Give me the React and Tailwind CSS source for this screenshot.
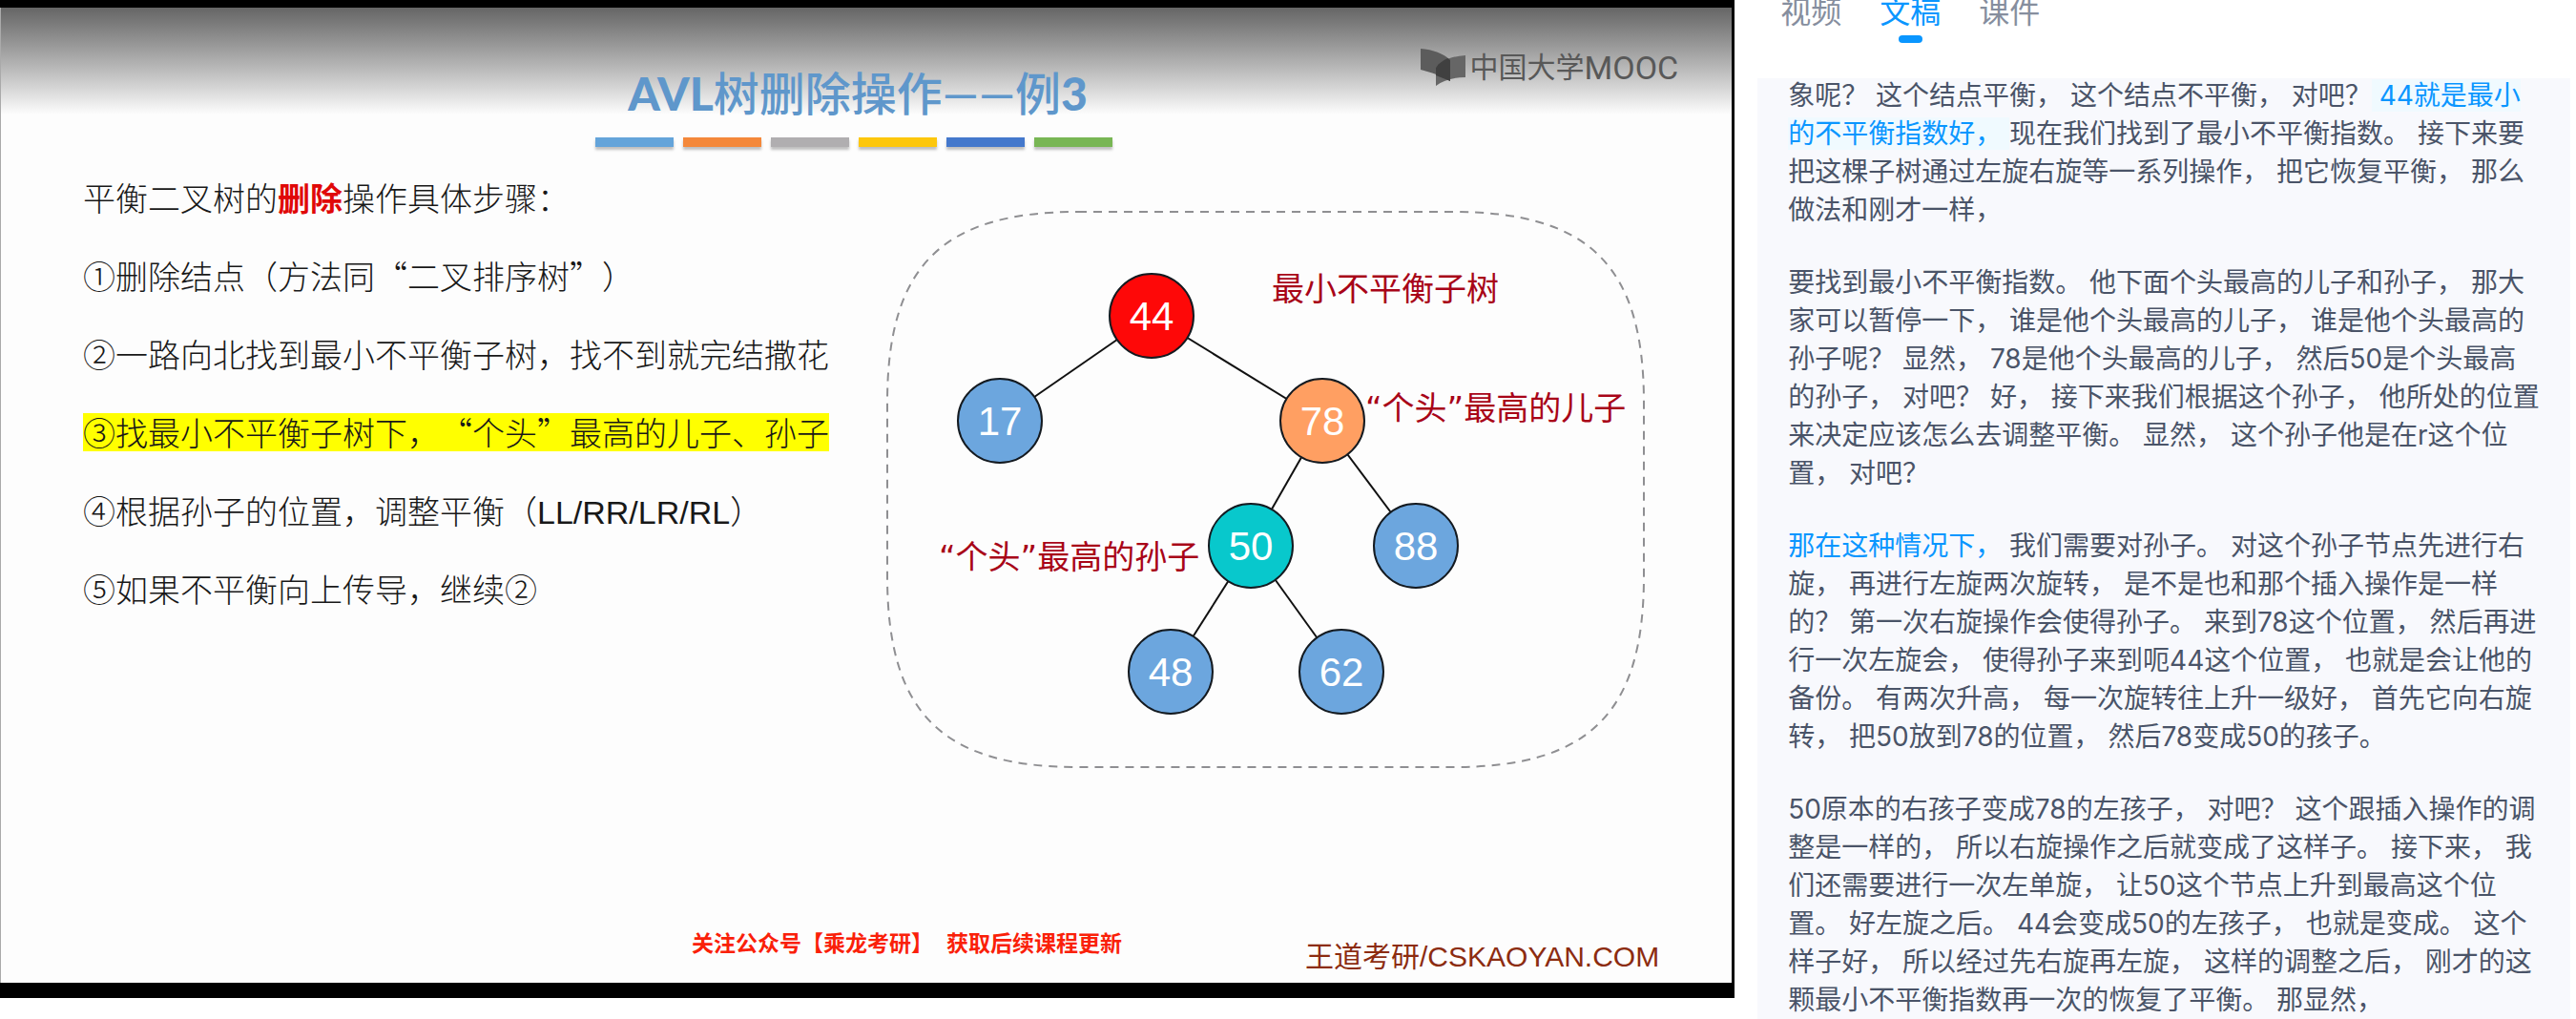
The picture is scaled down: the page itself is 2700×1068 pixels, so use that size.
import React from "react";

const SANS = "font-['Liberation_Sans','Noto_Sans_CJK_SC',sans-serif]";
const UI = "font-[Inter,'Noto_Sans_CJK_SC',sans-serif]";

const BARS = [
  "bg-[#64a4da]",
  "bg-[#f4883a]",
  "bg-[#b0aeb0]",
  "bg-[#fdc70c]",
  "bg-[#4478cc]",
  "bg-[#78b654]",
];

const NODES = [
  { v: 44, x: 280, y: 112, fill: "#fe0808" },
  { v: 17, x: 121, y: 222, fill: "#6ca6de" },
  { v: 78, x: 459, y: 222, fill: "#ff9f62" },
  { v: 50, x: 384, y: 353, fill: "#08c8cc" },
  { v: 88, x: 557, y: 353, fill: "#6ca6de" },
  { v: 48, x: 300, y: 485, fill: "#6ca6de" },
  { v: 62, x: 479, y: 485, fill: "#6ca6de" },
];

const EDGES = [
  [0, 1],
  [0, 2],
  [2, 3],
  [2, 4],
  [3, 5],
  [3, 6],
];

const LABELS = [
  { t: "最小不平衡子树", x: 406, y: 96 },
  { t: "“个头”最高的儿子", x: 504, y: 221 },
  { t: "“个头”最高的孙子", x: 57, y: 377 },
];

const PARAGRAPHS = [
  [
    { t: "象呢？ 这个结点平衡， 这个结点不平衡， 对吧？" },
    { t: " 44就是最小的不平衡指数好， ", c: "bg-[#f0faff] text-[#0a96ff]" },
    { t: "现在我们找到了最小不平衡指数。 接下来要把这棵子树通过左旋右旋等一系列操作， 把它恢复平衡， 那么做法和刚才一样，" },
  ],
  [
    { t: "要找到最小不平衡指数。 他下面个头最高的儿子和孙子， 那大家可以暂停一下， 谁是他个头最高的儿子， 谁是他个头最高的孙子呢？ 显然， 78是他个头最高的儿子， 然后50是个头最高的孙子， 对吧？ 好， 接下来我们根据这个孙子， 他所处的位置来决定应该怎么去调整平衡。 显然， 这个孙子他是在r这个位置， 对吧？" },
  ],
  [
    { t: "那在这种情况下， ", c: "text-[#0a96ff]" },
    { t: "我们需要对孙子。 对这个孙子节点先进行右旋， 再进行左旋两次旋转， 是不是也和那个插入操作是一样的？ 第一次右旋操作会使得孙子。 来到78这个位置， 然后再进行一次左旋会， 使得孙子来到呃44这个位置， 也就是会让他的备份。 有两次升高， 每一次旋转往上升一级好， 首先它向右旋转， 把50放到78的位置， 然后78变成50的孩子。" },
  ],
  [
    { t: "50原本的右孩子变成78的左孩子， 对吧？ 这个跟插入操作的调整是一样的， 所以右旋操作之后就变成了这样子。 接下来， 我们还需要进行一次左单旋， 让50这个节点上升到最高这个位置。 好左旋之后。 44会变成50的左孩子， 也就是变成。 这个样子好， 所以经过先右旋再左旋， 这样的调整之后， 刚才的这颗最小不平衡指数再一次的恢复了平衡。 那显然，" },
  ],
];

function TreeDiagram() {
  return (
    <svg viewBox="0 0 800 588" className="w-[800px] shrink" role="img" aria-label="AVL树">
      <path
        d="M203 3H596C739 3 796 60 796 203V385C796 528 739 585 596 585H203C60 585 3 528 3 385V203C3 60 60 3 203 3Z"
        fill="none"
        stroke="#8f8f92"
        strokeWidth="2"
        strokeDasharray="9 7"
      />
      {EDGES.map(([a, b]) => (
        <line
          key={`${a}-${b}`}
          x1={NODES[a].x}
          y1={NODES[a].y}
          x2={NODES[b].x}
          y2={NODES[b].y}
          stroke="#111"
          strokeWidth="2"
        />
      ))}
      {NODES.map((n) => (
        <g key={n.v}>
          <circle cx={n.x} cy={n.y} r="44" fill={n.fill} stroke="#141a20" strokeWidth="2" />
          <text
            x={n.x}
            y={n.y + 15}
            textAnchor="middle"
            fill="#fff"
            className="font-['Liberation_Sans',sans-serif] text-[42px]"
          >
            {n.v}
          </text>
        </g>
      ))}
      {LABELS.map((l) => (
        <text
          key={l.t}
          x={l.x}
          y={l.y}
          fill="#a80418"
          className="font-['DejaVu_Sans','Noto_Sans_CJK_SC',sans-serif] text-[34px]"
        >
          {l.t}
        </text>
      ))}
    </svg>
  );
}

function MoocLogo() {
  return (
    <div className="absolute top-[43px] right-[56px] flex items-center gap-1 text-[#585858]">
      <svg viewBox="0 0 48 40" className="h-10 w-12" aria-hidden="true">
        <path d="M0 0C13 1 24 5 31 12V34C23 29 12 25 0 22Z" fill="#5c5c5c" />
        <path d="M16 39V20C22 12 33 8 47 7V30C35 30 24 33 16 39Z" fill="#666" />
        <path d="M16 28V20C19 15 24 12 28.500 10L31 12V34Z" fill="#404040" />
      </svg>
      <div className="flex items-center leading-10">
        <span className={`${SANS} text-[30px]`}>中国大学</span>
        <span className="font-[Roboto,sans-serif] text-[34px]">MOOC</span>
      </div>
    </div>
  );
}

function Slide() {
  return (
    <section className="w-[67.34%] shrink-0 self-start bg-black pt-2 pr-[3px] pb-4 [text-spacing-trim:space-all]">
      <div className="relative flex flex-col border-l border-[#aaa] bg-[#fdfdfd] pb-[7px]">
        <div className="absolute inset-x-0 top-0 h-[112px] bg-linear-to-b from-[#666] to-[#fdfdfd]" />
        <MoocLogo />
        <header className="relative flex flex-col items-center gap-[14px] pt-[58px] pr-[18px]">
          <h1 className="font-[Lato,'Noto_Sans_CJK_SC',sans-serif] text-[48px] leading-[64px] font-medium text-[#5f97cb]">
            <span className="font-black">AVL</span>树删除操作——例<span className="font-black">3</span>
          </h1>
          <div className="flex gap-[10px] pr-2">
            {BARS.map((c) => (
              <div key={c} className={`h-[10px] w-[82px] shadow-[0_3px_3px_rgba(0,0,0,0.25)] ${c}`} />
            ))}
          </div>
        </header>

        <div className="flex pt-3 pl-[86px]">
          <div className="w-[840px] shrink-0 font-['Noto_Sans_CJK_SC',sans-serif] text-[34px] leading-[82px] font-light whitespace-nowrap text-[#181818]">
            <p>
              平衡二叉树的<strong className="font-bold text-[#e00808]">删除</strong>操作具体步骤：
            </p>
            <ol>
              <li>①删除结点（方法同“二叉排序树”）</li>
              <li>②一路向北找到最小不平衡子树，找不到就完结撒花</li>
              <li className="flex h-[82px] items-center">
                <mark className="bg-[#ffff00] leading-10 text-[#181818]">③找最小不平衡子树下，“个头”最高的儿子、孙子</mark>
              </li>
              <li>
                ④根据孙子的位置，调整平衡（<span className="font-['Liberation_Sans',sans-serif] leading-none">LL/RR/LR/RL</span>）
              </li>
              <li>⑤如果不平衡向上传导，继续②</li>
            </ol>
          </div>
          <div className="min-w-0 pt-[53px]">
            <TreeDiagram />
          </div>
        </div>

        <footer className={`mt-[162px] flex h-[54px] items-start justify-between pr-[76px] pl-[724px] leading-10 whitespace-nowrap ${SANS}`}>
          <p className="flex gap-[14px] text-[23px] font-bold text-[#fa2008]">
            <span>关注公众号【乘龙考研】</span>
            <span>获取后续课程更新</span>
          </p>
          <p className="self-end text-[30px] text-[#8c2c10]">王道考研/CSKAOYAN.COM</p>
        </footer>
      </div>
    </section>
  );
}

function Transcript() {
  const tabs = ["视频", "文稿", "课件"];
  return (
    <aside className={`flex min-w-0 flex-1 flex-col pr-[6px] pl-6 ${UI}`}>
      <nav role="tablist" className="flex h-[82px] shrink-0 gap-10 pl-6 text-[32px]">
        {tabs.map((t) => (
          <button
            key={t}
            type="button"
            role="tab"
            aria-selected={t === "文稿"}
            className={`flex flex-col items-center self-start ${t === "文稿" ? "text-[#0a96ff]" : "text-[#868e9e]"}`}
          >
            <span className="-mt-3 leading-[49px]">{t}</span>
            {t === "文稿" && <span className="h-2 w-[25px] rounded-[4px] bg-[#0a96ff]" />}
          </button>
        ))}
      </nav>
      <div className="min-h-0 flex-1 overflow-hidden bg-[#f8f9fd] pr-[30px] pl-8">
        <div className="-mt-0.5 space-y-9 text-[28px] leading-10 text-[#4a5468]">
          {PARAGRAPHS.map((p, i) => (
            <p key={i}>
              {p.map((s, j) => (
                <span key={j} className={s.c}>
                  {s.t}
                </span>
              ))}
            </p>
          ))}
        </div>
      </div>
    </aside>
  );
}

export default function App() {
  return (
    <main className="flex h-screen overflow-hidden bg-white">
      <Slide />
      <Transcript />
    </main>
  );
}
